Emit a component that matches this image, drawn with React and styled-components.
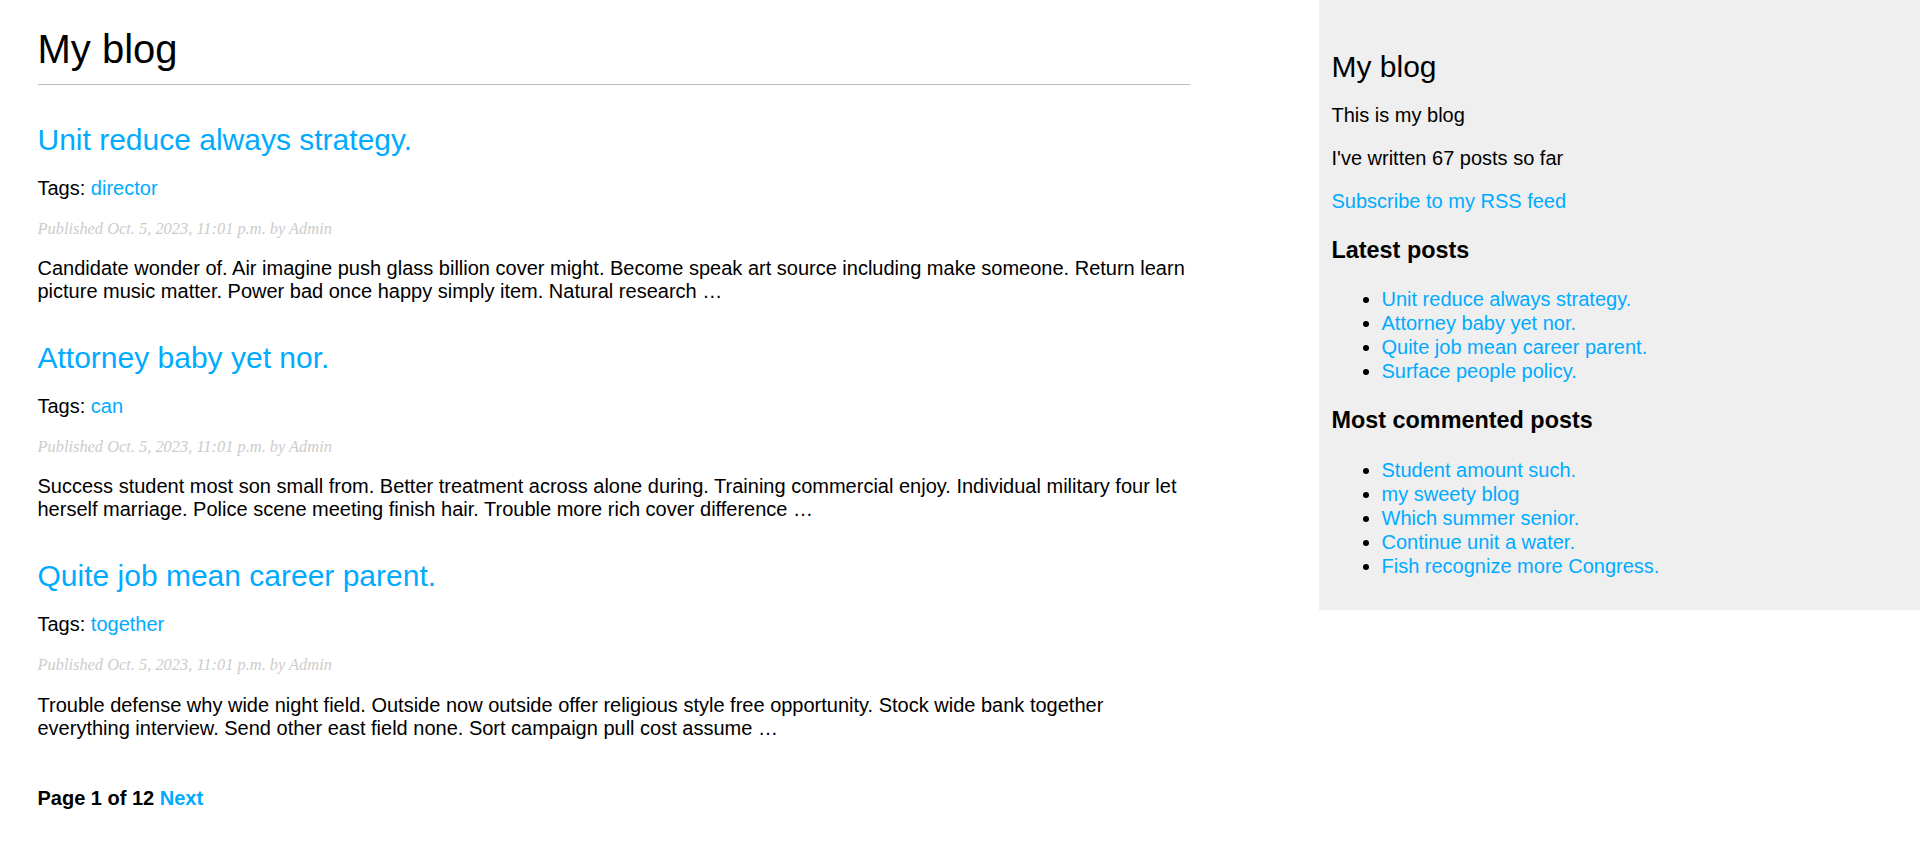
import React from 'react'
import styled, { createGlobalStyle } from 'styled-components'

const GlobalStyle = createGlobalStyle`
  html, body {
    margin: 0;
    padding: 0;
    background: #fff;
  }
  body {
    font-family: "Liberation Sans", Arial, Helvetica, sans-serif;
    font-size: 20px;
    color: #000;
  }
  a {
    color: #00abff;
    text-decoration: none;
  }
`

const Page = styled.div`
  display: flex;
  justify-content: space-between;
  align-items: flex-start;
`

const Content = styled.main`
  width: 1152px;
  padding-left: 37.5px;
`

const Title = styled.h1`
  font-size: 40px;
  font-weight: normal;
  margin: 26.8px 0;
  padding-bottom: 12.5px;
  border-bottom: 1px solid #bbb;
`

const PostTitle = styled.h2`
  font-size: 30px;
  font-weight: normal;
  margin: 37.5px 0 0;
`

const Text = styled.p`
  margin: 20px 0;
`

const Date = styled.p`
  margin: 15px 0;
  color: #ccc;
  font-family: "Liberation Serif", Georgia, serif;
  font-size: 16.4px;
  line-height: 17.6px;
  font-style: italic;
`

const Pagination = styled.div`
  margin: 47px 0;
  font-weight: bold;
`

const Sidebar = styled.aside`
  width: 576px;
  padding: 12.5px;
  background: #efefef;
`

const SideTitle = styled.h2`
  font-size: 30px;
  font-weight: normal;
  margin: 37.5px 0 0;
`

const SideHeading = styled.h3`
  font-size: 23.4px;
  font-weight: bold;
  margin: 24px 0 23.4px;
`

const List = styled.ul`
  margin: 20px 0;
  padding-left: 50px;
`

const Item = styled.li`
  line-height: 24px;
`

const posts = [
  {
    title: 'Unit reduce always strategy.',
    tag: 'director',
    body: 'Candidate wonder of. Air imagine push glass billion cover might. Become speak art source including make someone. Return learn picture music matter. Power bad once happy simply item. Natural research …',
  },
  {
    title: 'Attorney baby yet nor.',
    tag: 'can',
    body: 'Success student most son small from. Better treatment across alone during. Training commercial enjoy. Individual military four let herself marriage. Police scene meeting finish hair. Trouble more rich cover difference …',
  },
  {
    title: 'Quite job mean career parent.',
    tag: 'together',
    body: 'Trouble defense why wide night field. Outside now outside offer religious style free opportunity. Stock wide bank together everything interview. Send other east field none. Sort campaign pull cost assume …',
  },
]

const latest = [
  'Unit reduce always strategy.',
  'Attorney baby yet nor.',
  'Quite job mean career parent.',
  'Surface people policy.',
]

const commented = [
  'Student amount such.',
  'my sweety blog',
  'Which summer senior.',
  'Continue unit a water.',
  'Fish recognize more Congress.',
]

export default function App() {
  return (
    <>
      <GlobalStyle />
      <Page>
        <Content>
          <Title>My blog</Title>
          {posts.map((post) => (
            <article key={post.title}>
              <PostTitle><a href="#">{post.title}</a></PostTitle>
              <Text>Tags: <a href="#">{post.tag}</a></Text>
              <Date>Published Oct. 5, 2023, 11:01 p.m. by Admin</Date>
              <Text>{post.body}</Text>
            </article>
          ))}
          <Pagination>
            Page 1 of 12 <a href="#">Next</a>
          </Pagination>
        </Content>

        <Sidebar>
          <SideTitle>My blog</SideTitle>
          <Text>This is my blog</Text>
          <Text>I've written 67 posts so far</Text>
          <Text><a href="#">Subscribe to my RSS feed</a></Text>
          <SideHeading>Latest posts</SideHeading>
          <List>
            {latest.map((t) => <Item key={t}><a href="#">{t}</a></Item>)}
          </List>
          <SideHeading>Most commented posts</SideHeading>
          <List>
            {commented.map((t) => <Item key={t}><a href="#">{t}</a></Item>)}
          </List>
        </Sidebar>
      </Page>
    </>
  )
}
